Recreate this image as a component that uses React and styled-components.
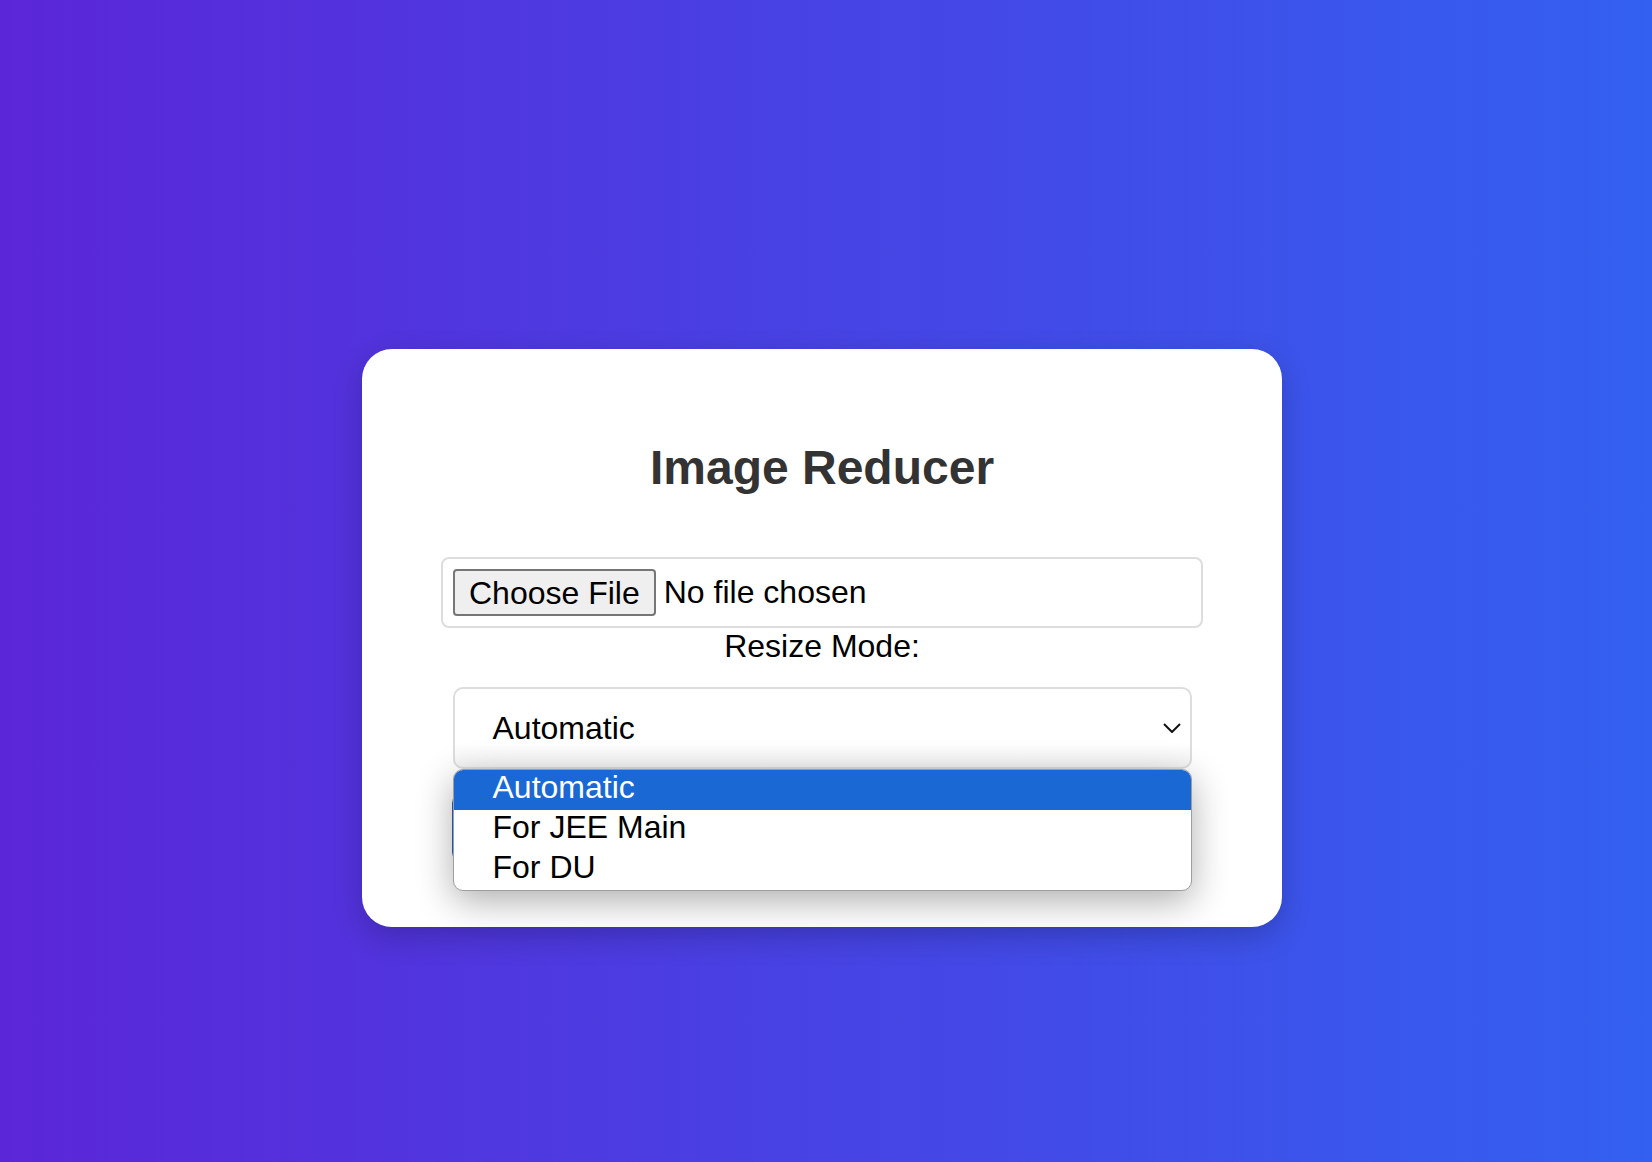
import React from 'react';
import styled, { createGlobalStyle } from 'styled-components';

const GlobalStyle = createGlobalStyle`
  * {
    box-sizing: border-box;
  }
  body {
    margin: 0;
    font-family: 'Liberation Sans', Arial, sans-serif;
  }
`;

const Page = styled.div`
  min-height: 100vh;
  background: linear-gradient(to right, #5b26d7, #3360f0);
  display: flex;
  justify-content: center;
  align-items: flex-start;
  padding: 349px 8px 0 0;
`;

const Card = styled.div`
  width: 920px;
  background-color: #fff;
  border-radius: 30px;
  box-shadow: 0 10px 30px rgba(0, 0, 0, 0.2);
  display: flex;
  flex-direction: column;
  align-items: center;
  padding: 91px 0 65px;
`;

const Title = styled.h1`
  margin: 0 0 62px;
  font-size: 48px;
  font-weight: bold;
  line-height: 55px;
  color: #333;
`;

const FileBox = styled.div`
  width: 762px;
  border: 2px solid #ddd;
  border-radius: 8px;
  padding: 10px;
  display: flex;
  align-items: center;
  gap: 8px;
  font-size: 32px;
  color: #000;
`;

const FileButton = styled.button`
  font-family: inherit;
  font-size: 32px;
  color: #000;
  background-color: #efefef;
  border: 2px solid #767676;
  border-radius: 4px;
  height: 47px;
  padding: 0 14px;
  line-height: 1;
`;

const Label = styled.label`
  font-size: 32px;
  line-height: 37px;
  color: #000;
`;

const SelectWrap = styled.div`
  position: relative;
  width: 739px;
  margin-top: 22px;
`;

const SelectBox = styled.div`
  height: 82px;
  border: 2px solid #ddd;
  border-radius: 10px;
  background: linear-gradient(to bottom, #fff 70%, #f4f4f4);
  display: flex;
  align-items: center;
  justify-content: space-between;
  padding: 0 9px 0 38px;
  font-size: 32px;
  color: #000;
`;

const Menu = styled.ul`
  position: absolute;
  top: 100%;
  left: 0;
  right: 0;
  margin: 0;
  padding: 0;
  list-style: none;
  background: #fff;
  border: 1px solid #9e9e9e;
  border-radius: 10px;
  overflow: hidden;
  box-shadow: 0 10px 36px rgba(0, 0, 0, 0.32);
  z-index: 2;
`;

const MenuItem = styled.li`
  height: 40px;
  padding: 0 0 6px 39px;
  font-size: 32px;
  line-height: 34px;
  color: ${({ active }) => (active ? '#fff' : '#000')};
  background-color: ${({ active }) => (active ? '#1a68d3' : 'transparent')};
`;

const SubmitButton = styled.button`
  width: 740px;
  height: 69px;
  margin-top: 24px;
  border: none;
  border-radius: 10px;
  background-color: #1a68d3;
  color: #fff;
  font-family: inherit;
  font-size: 32px;
`;

const Chevron = () => (
  <svg width="18" height="10" viewBox="0 0 18 10" fill="none">
    <path d="M1 1l8 8 8-8" stroke="#111" strokeWidth="2" />
  </svg>
);

const options = ['Automatic', 'For JEE Main', 'For DU'];

const App = () => (
  <>
    <GlobalStyle />
    <Page>
      <Card>
        <Title>Image Reducer</Title>
        <FileBox>
          <FileButton>Choose File</FileButton>
          <span>No file chosen</span>
        </FileBox>
        <Label>Resize Mode:</Label>
        <SelectWrap>
          <SelectBox>
            <span>Automatic</span>
            <Chevron />
          </SelectBox>
          <Menu>
            {options.map((opt, i) => (
              <MenuItem key={opt} active={i === 0}>
                {opt}
              </MenuItem>
            ))}
          </Menu>
        </SelectWrap>
        <SubmitButton>Reduce Image</SubmitButton>
      </Card>
    </Page>
  </>
);

export default App;
